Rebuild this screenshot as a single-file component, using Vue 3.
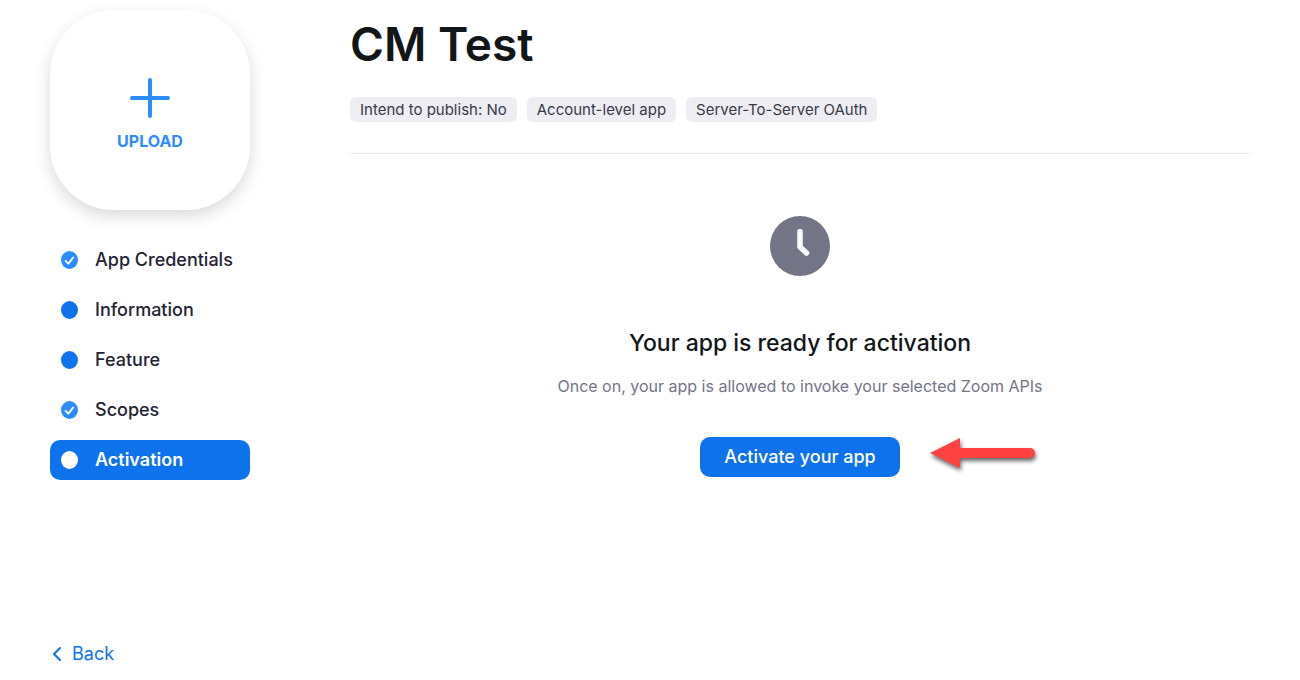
<script setup>
import { ref } from 'vue'

const steps = [
  { id: 'credentials', label: 'App Credentials', done: true },
  { id: 'information', label: 'Information', done: false },
  { id: 'feature', label: 'Feature', done: false },
  { id: 'scopes', label: 'Scopes', done: true },
  { id: 'activation', label: 'Activation', done: false },
]
const current = ref('activation')
const tags = ['Intend to publish: No', 'Account-level app', 'Server-To-Server OAuth']
</script>

<template>
  <div class="page">
    <aside class="sidebar">
      <button type="button" class="upload">
        <svg class="plus" viewBox="0 0 40 40" aria-hidden="true">
          <path d="M20 2v36M2 20h36" fill="none" stroke="currentColor" stroke-width="4" stroke-linecap="round" />
        </svg>
        <span>UPLOAD</span>
      </button>

      <nav class="steps" aria-label="App setup">
        <a
          v-for="step in steps"
          :key="step.id"
          :href="'#' + step.id"
          class="step"
          :class="{ active: step.id === current }"
          @click.prevent="current = step.id"
        >
          <svg class="dot" :class="{ done: step.done }" viewBox="0 0 17 18" aria-hidden="true">
            <ellipse cx="8.5" cy="9" rx="8.5" ry="9" fill="currentColor" />
            <path v-if="step.done" d="M4.600 9.800l2.700 2.800 5-6.200" fill="none" stroke="#fff" stroke-width="1.800" stroke-linecap="round" stroke-linejoin="round" />
          </svg>
          <span>{{ step.label }}</span>
        </a>
      </nav>

      <a href="#back" class="back">
        <svg viewBox="0 0 10 16" aria-hidden="true">
          <path d="M8 2L2 8l6 6" fill="none" stroke="currentColor" stroke-width="2" stroke-linecap="round" stroke-linejoin="round" />
        </svg>
        <span>Back</span>
      </a>
    </aside>

    <main class="main">
      <header class="header">
        <h1>CM Test</h1>
        <ul class="tags">
          <li v-for="tag in tags" :key="tag">{{ tag }}</li>
        </ul>
      </header>

      <section class="activation">
        <svg class="clock" viewBox="0 0 60 60" aria-hidden="true">
          <circle cx="30" cy="30" r="30" fill="#747487" />
          <path d="M30 15.500v15.500l6.500 6" fill="none" stroke="#fff" stroke-width="5.500" stroke-linecap="round" stroke-linejoin="round" />
        </svg>
        <h2>Your app is ready for activation</h2>
        <p>Once on, your app is allowed to invoke your selected Zoom APIs</p>
        <div class="action">
          <button type="button" class="activate">Activate your app</button>
          <svg class="arrow" viewBox="0 0 120 50" aria-hidden="true">
            <path d="M10 23L40 8v10h70a5 5 0 0 1 0 10H40v10z" fill="#ff4141" />
          </svg>
        </div>
      </section>
    </main>
  </div>
</template>

<style>
body {
  margin: 0;
  background: #fff;
}
</style>

<style scoped>
.page {
  box-sizing: border-box;
  display: flex;
  gap: 100px;
  min-height: 100vh;
  padding: 10px 50px;
  color: #131619;
  font-family: Inter, "Liberation Sans", sans-serif;
}
.sidebar {
  display: flex;
  flex: 0 0 200px;
  flex-direction: column;
}
.upload {
  display: flex;
  flex-direction: column;
  align-items: center;
  justify-content: center;
  gap: 11px;
  height: 200px;
  padding: 11px 0 0;
  border: 0;
  border-radius: 64px;
  background: #fff;
  box-shadow: 0 6px 16px rgba(0, 0, 0, 0.15);
  color: #2d8cff;
  font: 700 16px/24px Inter, "Liberation Sans", sans-serif;
  cursor: pointer;
}
.plus {
  width: 40px;
  height: 40px;
}
.steps {
  display: flex;
  flex-direction: column;
  gap: 10px;
  margin-top: 30px;
}
.step {
  display: flex;
  align-items: center;
  gap: 17px;
  height: 40px;
  padding: 0 11px;
  border-radius: 10px;
  color: #232333;
  font-size: 18px;
  font-weight: 500;
  text-decoration: none;
}
.step span {
  padding-bottom: 2px;
}
.dot {
  width: 17px;
  height: 18px;
  color: #0e72ed;
}
.dot.done {
  color: #2d8cff;
}
.step.active {
  background: #0e72ed;
  color: #fff;
  font-weight: 600;
}
.step.active .dot {
  color: #fff;
}
.back {
  display: flex;
  align-items: center;
  align-self: flex-start;
  gap: 10px;
  margin-top: auto;
  padding: 0 2px 4px;
  color: #0e72ed;
  font-size: 18px;
  line-height: 24px;
  text-decoration: none;
}
.back svg {
  width: 10px;
  height: 16px;
}
.main {
  flex: 1;
  min-width: 0;
}
.header {
  padding-bottom: 31px;
  border-bottom: 1px solid #ebebf0;
}
h1 {
  margin: 4px 0 23px;
  font-size: 46px;
  font-weight: 600;
  line-height: 60px;
}
.tags {
  display: flex;
  flex-wrap: wrap;
  gap: 10px;
  margin: 0;
  padding: 0;
  list-style: none;
}
.tags li {
  padding: 0 10px;
  border-radius: 6px;
  background: #ededf3;
  color: #3a3a46;
  font-size: 15px;
  font-weight: 400;
  line-height: 25px;
}
.activation {
  display: flex;
  flex-direction: column;
  align-items: center;
  padding-top: 62px;
  text-align: center;
}
.clock {
  width: 60px;
  height: 60px;
}
h2 {
  margin: 51px 0 0;
  font-size: 23px;
  font-weight: 500;
  line-height: 32px;
}
p {
  margin: 15px 0 0;
  color: #747487;
  font-size: 16px;
  line-height: 24px;
}
.action {
  position: relative;
  margin-top: 39px;
}
.activate {
  height: 40px;
  padding: 0 24px;
  border: 0;
  border-radius: 10px;
  background: #0e72ed;
  color: #fff;
  font: 500 18px/24px Inter, "Liberation Sans", sans-serif;
  cursor: pointer;
}
.arrow {
  position: absolute;
  top: -7px;
  left: 100%;
  width: 120px;
  height: 50px;
  margin-left: 20px;
  overflow: visible;
  filter: drop-shadow(1px 3px 2px rgba(0, 0, 0, 0.6));
}
</style>
